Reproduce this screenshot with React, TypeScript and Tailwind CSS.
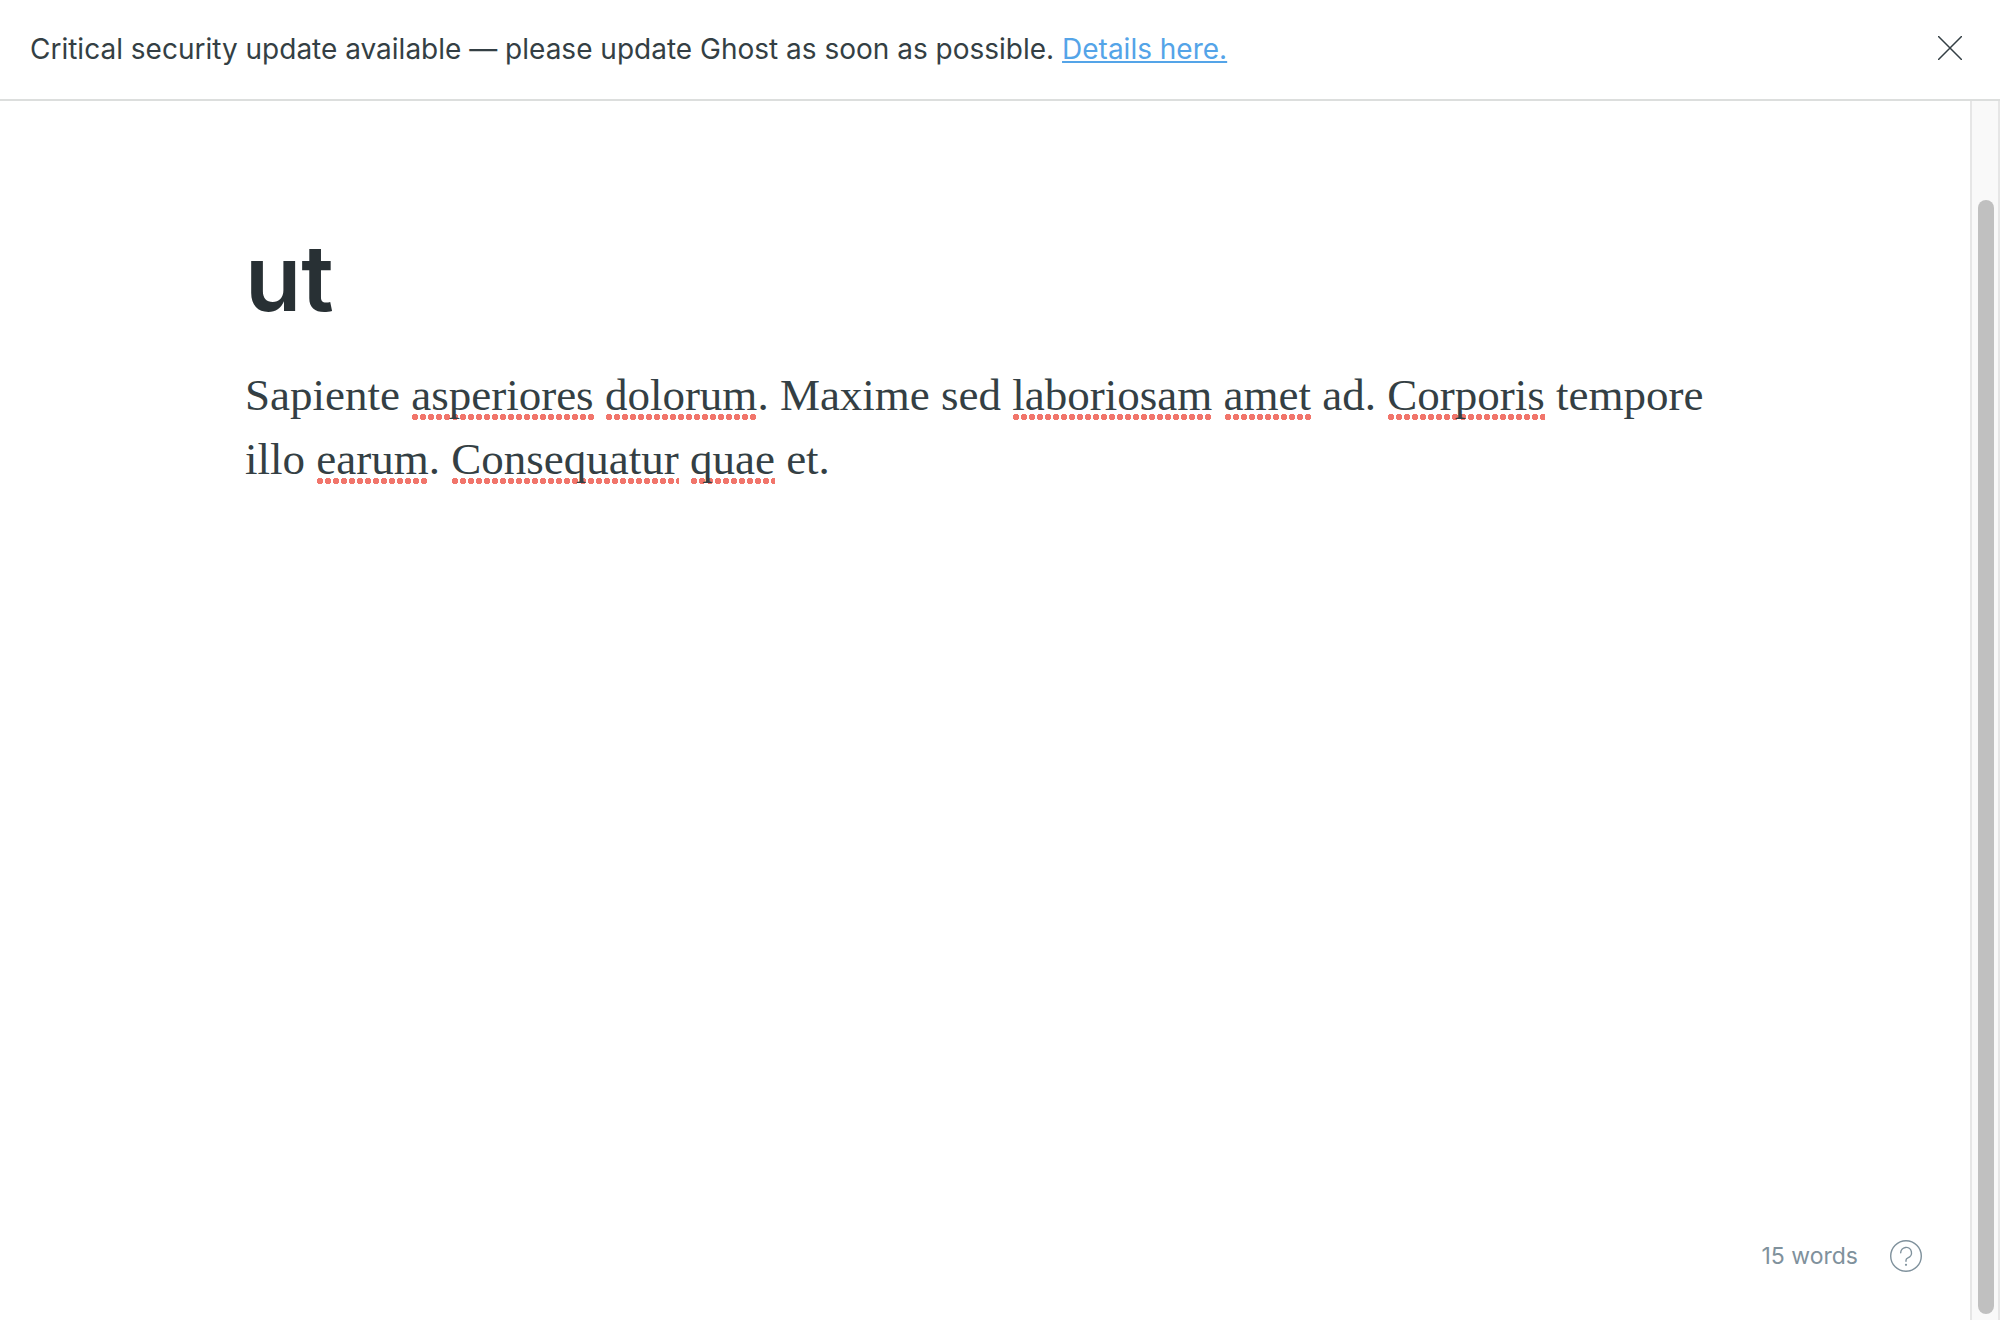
import type { ReactNode } from "react";

function Misspelled({ children }: { children: ReactNode }) {
  return (
    <span className="bg-[radial-gradient(circle,#f1756b_3px,transparent_3.5px)] bg-[length:8px_6px] bg-[position:left_bottom] bg-repeat-x">
      {children}
    </span>
  );
}

function UpdateBanner() {
  return (
    <header className="flex items-start justify-between border-b-2 border-[#dcdedd] py-7 pr-9 pl-[30px]">
      <p className="text-[28px] leading-[43px] text-[#343f44]">
        Critical security update available — please update Ghost as soon as possible.{" "}
        <a href="#details" className="text-[#54a4e8] underline decoration-2 underline-offset-2">
          Details here.
        </a>
      </p>
      <button type="button" aria-label="Close" className="flex h-10 w-7 items-center justify-center text-[#343f44]">
        <svg viewBox="0 0 24 24" className="size-6" fill="none" stroke="currentColor" strokeWidth="1.5" strokeLinecap="round">
          <path d="M.5.5l23 23M23.5.5l-23 23" />
        </svg>
      </button>
    </header>
  );
}

function Editor() {
  return (
    <main className="flex flex-1 flex-col">
      <article className="flex-1 px-[245px] pt-[122px]">
        <input
          type="text"
          aria-label="Post title"
          defaultValue="ut"
          spellCheck={false}
          className="block w-full text-[92px] leading-[110px] font-semibold text-[#283034] outline-none"
        />
        <p className="mt-[30px] font-['Liberation_Serif',Georgia,serif] text-[45px] leading-[64px] text-[#343f44]">
          Sapiente <Misspelled>asperiores</Misspelled> <Misspelled>dolorum</Misspelled>. Maxime sed{" "}
          <Misspelled>laboriosam</Misspelled> <Misspelled>amet</Misspelled> ad. <Misspelled>Corporis</Misspelled> tempore
          illo <Misspelled>earum</Misspelled>. <Misspelled>Consequatur</Misspelled> <Misspelled>quae</Misspelled> et.
        </p>
      </article>
      <footer className="flex items-center justify-end gap-8 pr-12 pb-12 text-[23px] leading-8 text-[#7f919c]">
        <span>15 words</span>
        <button type="button" aria-label="Help" className="size-8">
          <svg viewBox="0 0 32 32" className="size-8" fill="none" stroke="currentColor" strokeWidth="1.4">
            <circle cx="16" cy="16" r="15.3" />
            <path strokeLinecap="round" strokeLinejoin="round" d="M10.7 12.8a5.4 5.4 0 1 1 7.2 5.1c-1.2.4-1.9 1.2-1.9 2.4v1" />
            <circle cx="16" cy="24.8" r="1.1" fill="currentColor" stroke="none" />
          </svg>
        </button>
      </footer>
    </main>
  );
}

function ScrollTrack() {
  return (
    <div aria-hidden="true" className="flex w-[30px] flex-col border-x-2 border-[#e6e6e6] bg-[#f9f9f9] px-1.5 pt-[99px] pb-1.5">
      <div className="w-4 flex-1 rounded-full bg-[#c0c0c0]" />
    </div>
  );
}

export default function App() {
  return (
    <div className="flex min-h-screen flex-col bg-white font-['Inter',sans-serif]">
      <UpdateBanner />
      <div className="flex flex-1">
        <Editor />
        <ScrollTrack />
      </div>
    </div>
  );
}
